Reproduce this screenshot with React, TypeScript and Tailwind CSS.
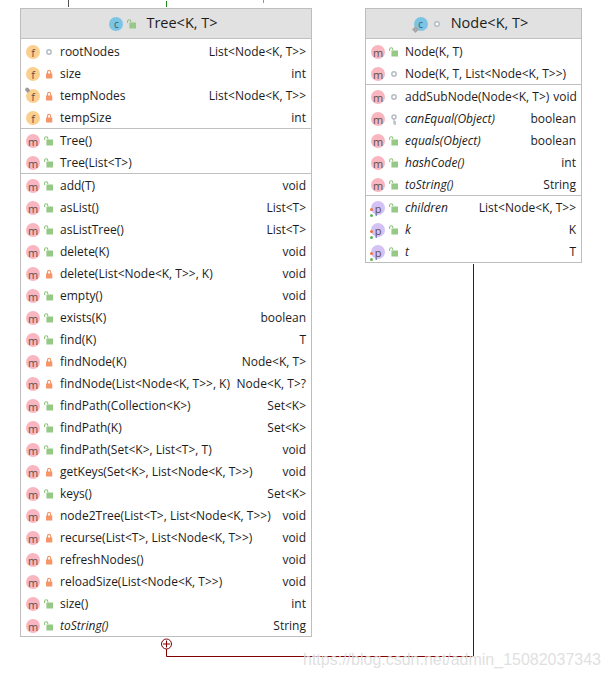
const FONT = "font-['Open_Sans','Noto_Sans',sans-serif]";

type Vis = 'pub' | 'priv' | 'pkg' | 'prot';
type Kind = 'f' | 'm' | 'p';
type Row = { k: Kind; v: Vis; n: string; t?: string; i?: boolean; pin?: boolean };

function VisIcon({ v }: { v: Vis }) {
  if (v === 'pkg')
    return (
      <svg width="10" height="10" viewBox="0 0 10 10">
        <circle cx="5" cy="5" r="2.2" fill="#fff" stroke="#b4bcc4" strokeWidth="1.5" />
      </svg>
    );
  if (v === 'priv')
    return (
      <svg width="10" height="10" viewBox="0 0 10 10">
        <path d="M3.5 5V3a1.6 1.6 0 0 1 3.2 0V5" fill="none" stroke="#f4966a" strokeWidth="1.2" />
        <rect x="2" y="4.5" width="6.3" height="5" fill="#f4966a" />
      </svg>
    );
  if (v === 'prot')
    return (
      <svg width="10" height="11" viewBox="0 0 10 11">
        <circle cx="5" cy="3" r="2" fill="none" stroke="#b4bcc4" strokeWidth="1.5" />
        <path d="M5 5v5M5 8h2M5 10h2" stroke="#b4bcc4" strokeWidth="1.3" fill="none" />
      </svg>
    );
  return (
    <svg width="10" height="10" viewBox="0 0 10 10">
      <path d="M.6 4V2.4a1.6 1.6 0 0 1 3.2 0V3" fill="none" stroke="#8cc47c" strokeWidth="1.1" />
      <rect x="2.4" y="3.5" width="6.6" height="6" fill="#96c985" />
    </svg>
  );
}

function KindIcon({ k, pin }: { k: Kind; pin?: boolean }) {
  const bg = k === 'f' ? 'bg-[#fbcf8e]' : k === 'm' ? 'bg-[#f9b6c0]' : 'bg-[#d5c2f5]';
  return (
    <span className={`relative flex h-[14px] w-[14px] shrink-0 items-center justify-center rounded-full text-[11px] leading-none text-[#5b5148] ${bg}`}>
      {k}
      {pin && <span className="absolute -left-px -top-px h-[4px] w-[5px] rotate-45 rounded-sm bg-[#9b9b9b]" />}
      {k === 'p' && (
        <>
          <span className="absolute -left-[1.5px] top-[7px] h-[3px] w-[3px] rounded-full bg-[#f0733c]" />
          <span className="absolute -left-[1.5px] top-[13px] h-[3px] w-[3px] rounded-full bg-[#5cb85c]" />
        </>
      )}
    </span>
  );
}

function ClassRow({ r }: { r: Row }) {
  return (
    <div className="flex h-[22px] items-center pl-[5px] pr-[5px] pt-[2px] text-[12px] text-[#1c1c1c]">
      <KindIcon k={r.k} pin={r.pin} />
      <span className="ml-[4px] flex w-[10px] shrink-0">
        <VisIcon v={r.v} />
      </span>
      <span className={`ml-[6px] whitespace-nowrap ${r.i ? 'italic' : ''}`}>{r.n}</span>
      {r.t && <span className="ml-auto whitespace-nowrap pl-1">{r.t}</span>}
    </div>
  );
}

function Header({ title, vis, tag }: { title: string; vis: Vis; tag?: boolean }) {
  return (
    <div className="flex h-[30px] items-center justify-center border-b border-[#c0c0c0] bg-[#e1e1e1] pr-[5px]">
      <span className="relative flex h-[14px] w-[14px] items-center justify-center rounded-full bg-[#7cc4e4] text-[10px] leading-none text-[#3a5a6a]">
        c
        {tag && <span className="absolute -bottom-[1px] -left-[1px] h-[5px] w-[5px] rotate-45 bg-[#a8a8a8]" />}
      </span>
      <span className="ml-[4px] flex w-[10px]">
        <VisIcon v={vis} />
      </span>
      <span className="ml-[9px] text-[14.5px] leading-none text-[#1c1c1c]">{title}</span>
    </div>
  );
}

function Section({ rows, top, last }: { rows: Row[]; top?: boolean; last?: boolean }) {
  return (
    <div className={`${top ? 'pt-px' : ''} ${last ? '' : 'border-b border-[#c0c0c0]'}`}>
      {rows.map((r, i) => (
        <ClassRow key={i} r={r} />
      ))}
    </div>
  );
}

const N = 'List<Node<K, T>>';

const treeA: Row[] = [
  { k: 'f', v: 'pkg', n: 'rootNodes', t: N },
  { k: 'f', v: 'priv', n: 'size', t: 'int' },
  { k: 'f', v: 'priv', n: 'tempNodes', t: N, pin: true },
  { k: 'f', v: 'priv', n: 'tempSize', t: 'int' },
];
const treeB: Row[] = [
  { k: 'm', v: 'pub', n: 'Tree()' },
  { k: 'm', v: 'pub', n: 'Tree(List<T>)' },
];
const treeC: Row[] = [
  { k: 'm', v: 'pub', n: 'add(T)', t: 'void' },
  { k: 'm', v: 'pub', n: 'asList()', t: 'List<T>' },
  { k: 'm', v: 'pub', n: 'asListTree()', t: 'List<T>' },
  { k: 'm', v: 'pub', n: 'delete(K)', t: 'void' },
  { k: 'm', v: 'priv', n: 'delete(List<Node<K, T>>, K)', t: 'void' },
  { k: 'm', v: 'pub', n: 'empty()', t: 'void' },
  { k: 'm', v: 'pub', n: 'exists(K)', t: 'boolean' },
  { k: 'm', v: 'pub', n: 'find(K)', t: 'T' },
  { k: 'm', v: 'priv', n: 'findNode(K)', t: 'Node<K, T>' },
  { k: 'm', v: 'priv', n: 'findNode(List<Node<K, T>>, K)', t: 'Node<K, T>?' },
  { k: 'm', v: 'pub', n: 'findPath(Collection<K>)', t: 'Set<K>' },
  { k: 'm', v: 'pub', n: 'findPath(K)', t: 'Set<K>' },
  { k: 'm', v: 'pub', n: 'findPath(Set<K>, List<T>, T)', t: 'void' },
  { k: 'm', v: 'priv', n: 'getKeys(Set<K>, List<Node<K, T>>)', t: 'void' },
  { k: 'm', v: 'pub', n: 'keys()', t: 'Set<K>' },
  { k: 'm', v: 'priv', n: 'node2Tree(List<T>, List<Node<K, T>>)', t: 'void' },
  { k: 'm', v: 'priv', n: 'recurse(List<T>, List<Node<K, T>>)', t: 'void' },
  { k: 'm', v: 'priv', n: 'refreshNodes()', t: 'void' },
  { k: 'm', v: 'priv', n: 'reloadSize(List<Node<K, T>>)', t: 'void' },
  { k: 'm', v: 'pub', n: 'size()', t: 'int' },
  { k: 'm', v: 'pub', n: 'toString()', t: 'String', i: true },
];
const nodeA: Row[] = [
  { k: 'm', v: 'pub', n: 'Node(K, T)' },
  { k: 'm', v: 'pkg', n: 'Node(K, T, List<Node<K, T>>)' },
];
const nodeB: Row[] = [
  { k: 'm', v: 'pkg', n: 'addSubNode(Node<K, T>)', t: 'void' },
  { k: 'm', v: 'prot', n: 'canEqual(Object)', t: 'boolean', i: true },
  { k: 'm', v: 'pub', n: 'equals(Object)', t: 'boolean', i: true },
  { k: 'm', v: 'pub', n: 'hashCode()', t: 'int', i: true },
  { k: 'm', v: 'pub', n: 'toString()', t: 'String', i: true },
];
const nodeC: Row[] = [
  { k: 'p', v: 'pub', n: 'children', t: N, i: true },
  { k: 'p', v: 'pub', n: 'k', t: 'K', i: true },
  { k: 'p', v: 'pub', n: 't', t: 'T', i: true },
];

export default function App() {
  return (
    <div className={`relative h-[678px] w-[609px] overflow-hidden bg-white ${FONT}`}>
      <div className="flex items-start pl-[20px] pt-[8px]">
        <div className="w-[292px] border border-[#bdbdbd] bg-white">
          <Header title="Tree<K, T>" vis="pub" />
          <Section rows={treeA} top />
          <Section rows={treeB} />
          <Section rows={treeC} last />
        </div>
        <div className="ml-[53px] w-[217px] border border-[#bdbdbd] bg-white">
          <Header title="Node<K, T>" vis="pkg" tag />
          <Section rows={nodeA} top />
          <Section rows={nodeB} />
          <Section rows={nodeC} last />
        </div>
      </div>

      {/* stubs of edges leaving the top of the crop */}
      <span className="absolute left-[68px] top-0 h-[7px] w-px bg-[#555]" />
      <span className="absolute left-[166px] top-[1px] h-[6px] w-px bg-[#1a8a1a]" />
      <span className="absolute left-[263px] top-0 h-[3px] w-px bg-[#a89a50]" />

      {/* inner-class connector */}
      <svg className="absolute left-0 top-0" width="609" height="678" fill="none">
        <circle cx="166.5" cy="644" r="5" stroke="#800000" strokeWidth="1" fill="#fff" />
        <path d="M166.5 640.5v7M163 644h7" stroke="#800000" strokeWidth="1" />
        <path d="M166.5 649v7.5H473.5V264" stroke="#800000" strokeWidth="1" />
      </svg>

      <span className="absolute left-[303px] top-[648px] whitespace-nowrap font-['Liberation_Sans',sans-serif] text-[16px] text-[#dcdcdc]/90">
        https://blog.csdn.net/admin_15082037343
      </span>
    </div>
  );
}
